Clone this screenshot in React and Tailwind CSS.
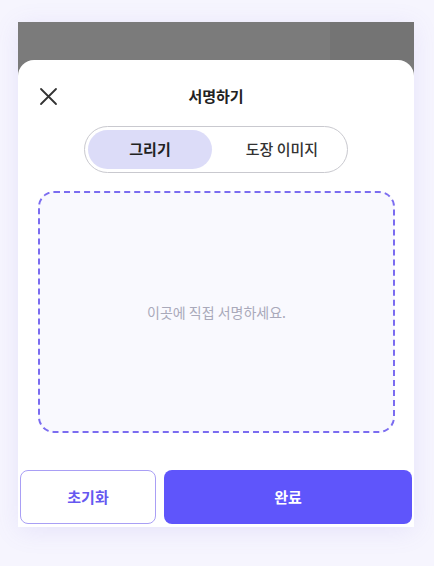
import React, { useState } from 'react';

const font = { fontFamily: '"Noto Sans CJK KR", "Noto Sans", sans-serif' };

const App = () => {
  const [mode, setMode] = useState('draw');

  return (
    <div className="w-[434px] h-[566px] bg-[#f6f5fe] pt-[22px] pl-[18px]" style={font}>
      {/* Phone frame */}
      <div className="w-[396px] h-[505px] flex flex-col bg-[#7a7a7a] shadow-[0_4px_24px_rgba(120,110,220,0.12)]">
        {/* Dimmed backdrop */}
        <div className="h-[38px] flex">
          <div className="flex-1 bg-[#7b7b7b]"></div>
          <div className="w-[84px] bg-[#747474]"></div>
        </div>

        {/* Bottom sheet */}
        <div className="flex-1 flex flex-col bg-white rounded-t-[16px]">
          {/* Header */}
          <div className="relative flex items-center justify-center h-[24px] mt-[24px]">
            <button className="absolute left-[21px] top-[3px] text-[#333]">
              <svg width="19" height="19" viewBox="0 0 19 19" fill="none" stroke="currentColor" strokeWidth="1.8" strokeLinecap="round">
                <path d="M2 2L17 17M17 2L2 17" />
              </svg>
            </button>
            <h1 className="text-[15px] font-bold text-[#222]">서명하기</h1>
          </div>

          {/* Toggle */}
          <div className="flex justify-center mt-[18px]">
            <div className="w-[264px] h-[47px] rounded-full border-[1.5px] border-[#c9c9cf] p-[3px] flex">
              <button
                onClick={() => setMode('draw')}
                className={`w-[124px] rounded-full text-[15px] ${mode === 'draw' ? 'bg-[#dcdcf8] font-bold text-[#222]' : 'font-medium text-[#333]'}`}
              >
                그리기
              </button>
              <button
                onClick={() => setMode('stamp')}
                className={`flex-1 pl-[8px] rounded-full text-[15px] ${mode === 'stamp' ? 'bg-[#dcdcf8] font-bold text-[#222]' : 'font-medium text-[#333]'}`}
              >
                도장 이미지
              </button>
            </div>
          </div>

          {/* Signature pad */}
          <div className="ml-[20px] mr-[19px] mt-[18px] h-[242px] rounded-[16px] border-2 border-dashed border-[#7b6cf0] bg-[#f9f9fe] flex items-center justify-center">
            <p className="text-[14px] text-[#a9a9ba]">이곳에 직접 서명하세요.</p>
          </div>

          {/* Actions */}
          <div className="mt-auto flex gap-[8px] px-[2px] pb-[3px]">
            <button className="w-[136px] h-[54px] rounded-[8px] border-[1.5px] border-[#a99ff5] bg-white text-[15px] font-bold text-[#6658f0]">
              초기화
            </button>
            <button className="flex-1 h-[54px] rounded-[8px] bg-[#5f55fb] text-[15px] font-bold text-white">
              완료
            </button>
          </div>
        </div>
      </div>
    </div>
  );
};

export default App;
